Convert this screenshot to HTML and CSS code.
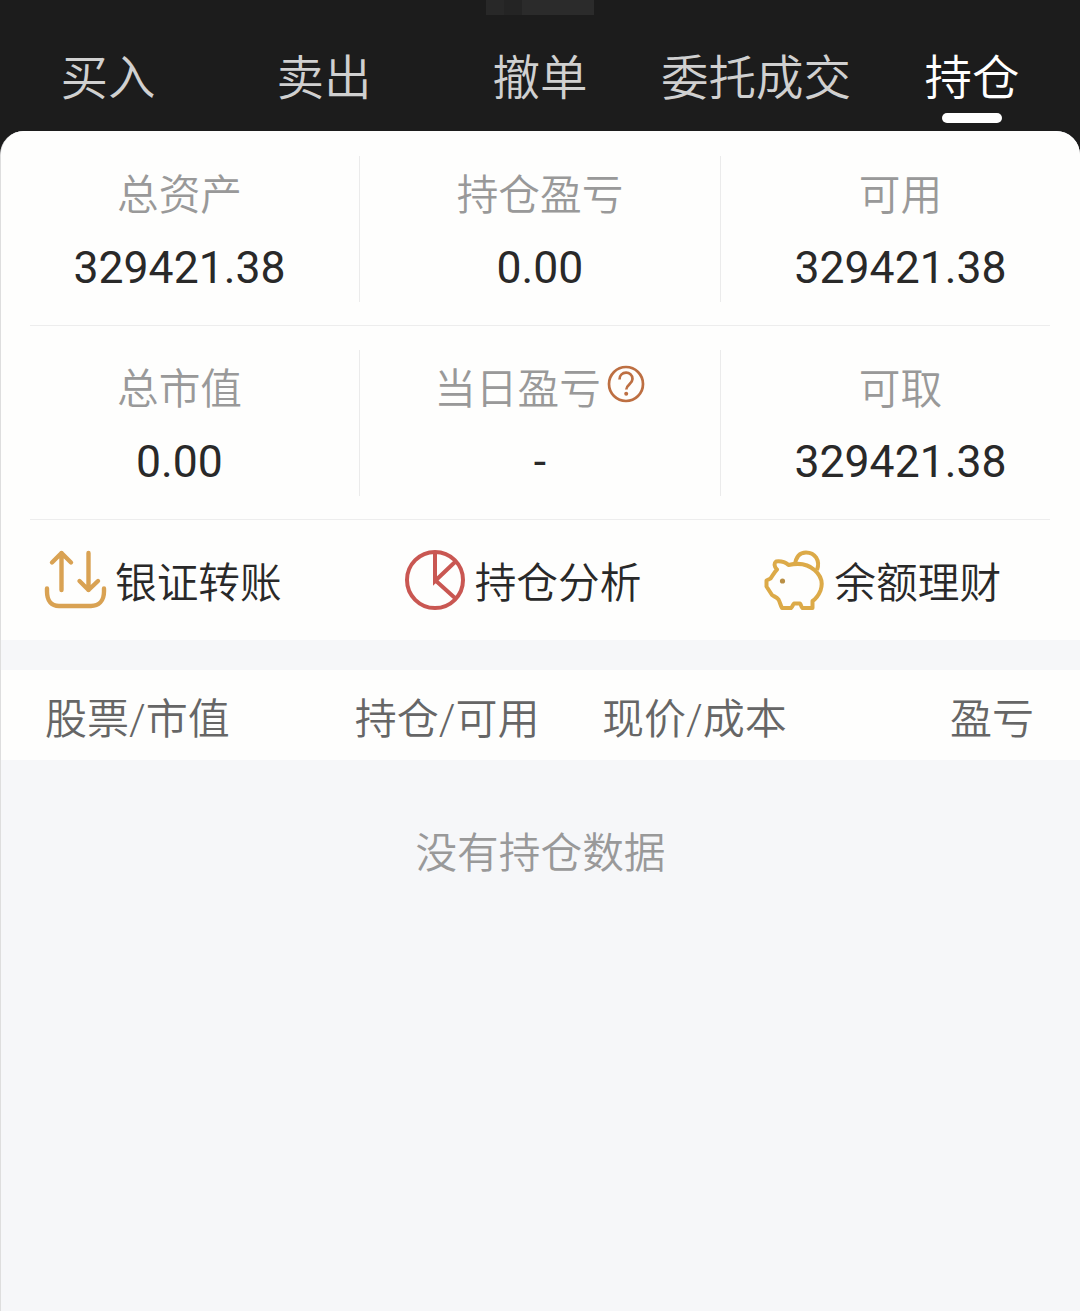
FILE: index.html
```html
<!DOCTYPE html>
<html lang="zh-CN">
<head>
<meta charset="utf-8">
<title>持仓</title>
<link rel="stylesheet" href="styles.css">
</head>
<body>
<div class="app">
  <header class="header">
    <div class="notch"><i></i><i></i><i></i><i></i></div>
    <nav class="tabs">
      <span class="tab">买入</span>
      <span class="tab">卖出</span>
      <span class="tab">撤单</span>
      <span class="tab">委托成交</span>
      <span class="tab active">持仓</span>
    </nav>
  </header>
  <main class="main">
    <section class="card">
      <div class="stats">
        <div class="stat"><div class="label">总资产</div><div class="value">329421.38</div></div>
        <div class="stat"><div class="label">持仓盈亏</div><div class="value">0.00</div></div>
        <div class="stat"><div class="label">可用</div><div class="value">329421.38</div></div>
      </div>
      <div class="stats">
        <div class="stat"><div class="label">总市值</div><div class="value">0.00</div></div>
        <div class="stat">
          <div class="label">当日盈亏<svg class="help" viewBox="0 0 40 40" fill="none" stroke="#bd6f42"><circle cx="20" cy="20" r="17" stroke-width="2.7"/><path d="M13.500 15.500C13.500 6.500 26.500 6.500 26.500 15c0 4.800-6.200 5.500-6.200 10.500" stroke-width="2.700"/><circle cx="20.200" cy="29.800" r="2" fill="#bd6f42" stroke="none"/></svg></div>
          <div class="value">-</div>
        </div>
        <div class="stat"><div class="label">可取</div><div class="value">329421.38</div></div>
      </div>
      <div class="actions">
        <div class="action">
          <svg class="icon transfer" viewBox="0 0 64 64" fill="none" stroke="#d9a253" stroke-width="4.400" stroke-linecap="round" stroke-linejoin="round"><path d="M18.500 42V5M9 14.500 18.500 5l9.500 9.500M45.500 5v37M36.500 33l9 9 9.500-9M4 40.500v3C4 53 8.500 58 16 58h32c7.500 0 13-5 13-14.500v-3"/></svg>
          <span>银证转账</span>
        </div>
        <div class="action">
          <svg class="icon pie" viewBox="0 0 64 64" fill="none" stroke="#c95752" stroke-width="4"><circle cx="32" cy="32" r="28"/><path d="M32 4v29l20-19M32 32l20.500 18.500"/></svg>
          <span>持仓分析</span>
        </div>
        <div class="action">
          <svg class="icon pig" viewBox="0 0 64 64" fill="none" stroke="#dcaa48" stroke-width="4" stroke-linejoin="round"><path d="M33 17.500C33.500 8.500 38 4.500 44 4.500c9 0 14.500 8 11 17.500"/><path d="M15 21.500c-3-2.500-3-6.500-1-8 4-.5 9 .5 12.500 3.500 11-2.500 20-.5 26 5C60 28.500 61 35.500 58.500 42.500c-2 5-5 8.500-8 10.500V60h-10c-1.500-1-1.500-4-2.500-4.500h-6c-1 .5-1.500 3.500-3 4.500H20c-1.500-2.500-2-6-3.500-8.500-2-2.500-4.500-3-6.500-4.500L4.500 38.500v-6l4-2c2.500-3.500 4-6.500 6.500-9z"/><circle cx="20.500" cy="33" r="2.600" fill="#b98f45" stroke="none"/></svg>
          <span>余额理财</span>
        </div>
      </div>
    </section>
    <section class="columns">
      <span>股票/市值</span><span>持仓/可用</span><span>现价/成本</span><span>盈亏</span>
    </section>
    <p class="empty">没有持仓数据</p>
  </main>
</div>
</body>
</html>
```
FILE: styles.css
```css
* { box-sizing: border-box; }
body {
  margin: 0;
  background: #1c1c1c;
  font-family: Roboto, "Noto Sans CJK SC", sans-serif;
  font-weight: 350;
}
.app { width: 1080px; height: 1311px; display: flex; flex-direction: column; overflow: hidden; }
.header { height: 131px; flex: none; background: #1c1c1c; }
.notch { display: flex; width: 108px; height: 15px; margin: 0 auto; }
.notch i { flex: 1; background: #2b2b2b; }
.notch i:first-child { flex: 0 0 18px; background: #282828; }
.notch i:nth-child(2) { flex: 0 0 18px; background: #242424; }
.tabs { display: grid; grid-template-columns: repeat(5, 1fr); }
.tab {
  display: flex;
  flex-direction: column;
  align-items: center;
  height: 116px;
  padding-top: 30px;
  font-size: 47.500px;
  line-height: 68px;
  color: #d0d0d0;
  white-space: nowrap;
}
.tab.active { color: #fff; }
.tab.active::after { content: ""; width: 60px; height: 10px; border-radius: 5px; background: #fff; }
.main {
  flex: 1;
  border-left: 1px solid #dedede;
  border-radius: 24px 24px 0 0;
  background: #f6f7f9;
  overflow: hidden;
}
.card { height: 509px; padding-top: 1px; background: #fefefd; }
.stats {
  display: grid;
  grid-template-columns: 329px 1fr 330px;
  height: 194px;
  margin: 0 30px 0 29px;
  padding: 24px 0 23px;
  border-bottom: 1px solid #ededed;
}
.stat { text-align: center; white-space: nowrap; }
.stat + .stat { border-left: 1px solid #ebebeb; }
.stat:first-child { padding-right: 30px; }
.stat:last-child { padding-left: 30px; }
.label {
  display: flex;
  align-items: center;
  justify-content: center;
  height: 72px;
  font-size: 41.700px;
  color: #999;
}
.help { width: 40px; height: 40px; margin: -4px 0 0 5px; }
.value { font-size: 44.500px; line-height: 72px; padding-top: 4px; height: 74px; font-weight: 400; color: #292929; }
.actions { display: grid; grid-template-columns: repeat(3, 1fr); height: 120px; }
.action {
  display: flex;
  align-items: center;
  gap: 8px;
  padding-left: 42px;
  font-size: 41.700px;
  color: #292929;
}
.icon { width: 64px; height: 64px; flex: none; }
.columns {
  display: grid;
  grid-template-columns: repeat(4, 1fr);
  align-items: center;
  height: 90px;
  margin-top: 30px;
  padding: 1px 46px 0 44px;
  background: #fefefd;
  font-size: 42px;
  color: #666;
  text-align: right;
}
.columns span:first-child { text-align: left; }
.empty { margin: 63px 0 0; font-size: 41.700px; line-height: 62px; text-align: center; color: #999; }
```
